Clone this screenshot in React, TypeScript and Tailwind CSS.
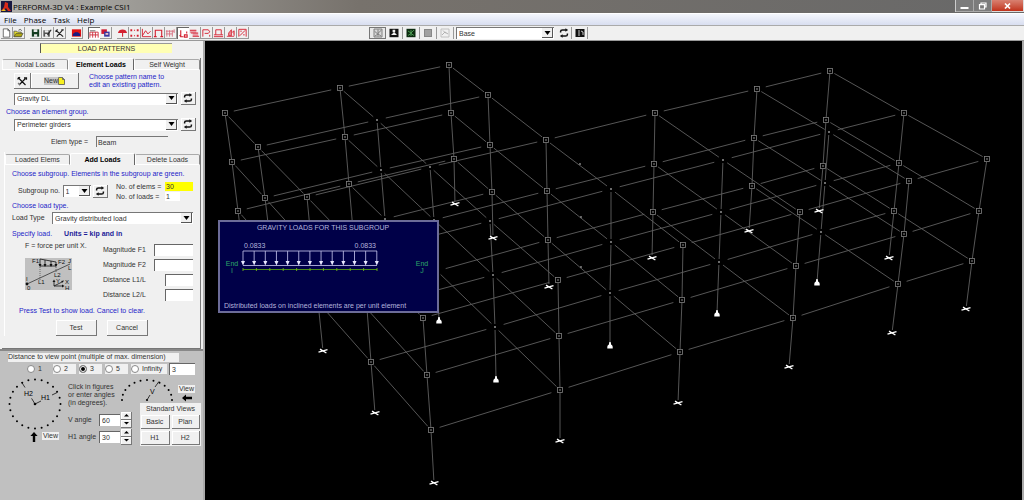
import React from "react";

type Pt = [number, number];
type Column = { row: string; pts: Pt[]; dot?: boolean; support: "fixed" | "pin" | "none" };

/* One entry per column line: roof, middle floor, lower floor, base. */
const columns: Column[] = [
  { row: "A", pts: [[225, 113], [232, 162], [238, 211], [244, 258]], support: "none" },
  { row: "A", pts: [[340, 88], [345, 137], [349, 184], [353, 230]], support: "none" },
  { row: "A", pts: [[449, 65], [451, 113], [454, 159], [455, 204]], support: "fixed" },
  { row: "B", pts: [[258, 147], [265, 198], [271, 248], [277, 296]], support: "none" },
  { row: "B", pts: [[377, 120], [381, 170], [385, 219], [388, 266]], dot: true, support: "none" },
  { row: "B", pts: [[488, 95], [490, 145], [492, 192], [493, 238]], support: "fixed" },
  { row: "C", pts: [[307, 197], [312, 250], [318, 302], [323, 351]], support: "fixed" },
  { row: "C", pts: [[430, 167], [434, 220], [437, 271], [439, 320]], dot: true, support: "pin" },
  { row: "C", pts: [[546, 140], [547, 191], [548, 240], [549, 287]], support: "fixed" },
  { row: "C", pts: [[655, 113], [654, 164], [653, 212], [652, 258]], support: "fixed" },
  { row: "C", pts: [[757, 89], [754, 138], [752, 186], [749, 231]], support: "fixed" },
  { row: "C", pts: [[830, 71], [826, 120], [823, 166], [819, 211]], support: "fixed" },
  { row: "D", pts: [[362, 254], [367, 309], [371, 362], [375, 413]], support: "fixed" },
  { row: "D", pts: [[490, 221], [493, 275], [495, 327], [496, 379]], dot: true, support: "pin" },
  { row: "D", pts: [[611, 189], [611, 242], [610, 293], [610, 345]], dot: true, support: "pin" },
  { row: "D", pts: [[723, 160], [721, 212], [719, 262], [717, 313]], dot: true, support: "pin" },
  { row: "D", pts: [[829, 132], [825, 183], [821, 232], [817, 282]], dot: true, support: "pin" },
  { row: "D", pts: [[904, 113], [899, 163], [894, 211], [889, 258]], support: "fixed" },
  { row: "E", pts: [[423, 318], [427, 375], [431, 430], [434, 483]], support: "fixed" },
  { row: "E", pts: [[558, 280], [559, 336], [560, 390], [560, 441]], support: "fixed" },
  { row: "E", pts: [[683, 245], [682, 300], [680, 352], [678, 403]], support: "fixed" },
  { row: "E", pts: [[800, 212], [796, 266], [793, 318], [789, 367]], support: "fixed" },
  { row: "E", pts: [[909, 181], [904, 234], [898, 284], [892, 333]], support: "fixed" },
  { row: "E", pts: [[987, 159], [979, 211], [972, 261], [966, 309]], support: "fixed" },
];

const rowOrder = ["A", "B", "C", "D", "E"];
const midDots: Pt[] = [[580, 164], [581, 217], [581, 267]];

function Beam({ a, b, gap }: { a: Pt; b: Pt; gap: number }) {
  const dx = b[0] - a[0];
  const dy = b[1] - a[1];
  const len = Math.hypot(dx, dy);
  const ux = (dx / len) * gap;
  const uy = (dy / len) * gap;
  return <line x1={a[0] + ux} y1={a[1] + uy} x2={b[0] - ux} y2={b[1] - uy} />;
}

function Frame() {
  const beams: React.ReactNode[] = [];
  rowOrder.forEach((name, r) => {
    const row = columns.filter((c) => c.row === name);
    const next = columns.filter((c) => c.row === rowOrder[r + 1]);
    row.forEach((col, i) => {
      for (let level = 0; level < 3; level++) {
        beams.push(<Beam key={`${name}${i}c${level}`} a={col.pts[level]} b={col.pts[level + 1]} gap={3} />);
        if (row[i + 1]) beams.push(<Beam key={`${name}${i}x${level}`} a={col.pts[level]} b={row[i + 1].pts[level]} gap={9} />);
        if (next[i]) beams.push(<Beam key={`${name}${i}y${level}`} a={col.pts[level]} b={next[i].pts[level]} gap={5} />);
      }
    });
  });
  return (
    <svg viewBox="205 41 817 459" preserveAspectRatio="xMinYMin meet" className="block h-full w-full" role="img" aria-label="Frame model">
      <g stroke="#606060" strokeWidth="0.9">{beams}</g>
      {columns.map((col, i) => (
        <g key={i}>
          {col.pts.slice(0, 3).map(([x, y], k) =>
            col.dot ? (
              <circle key={k} cx={x} cy={y} r="1" fill="#909090" />
            ) : (
              <g key={k}>
                <rect x={x - 2.5} y={y - 2.5} width="5" height="5" fill="#000" stroke="#808080" strokeWidth="0.8" />
                <circle cx={x} cy={y} r="0.8" fill="#a0a0a0" />
              </g>
            ),
          )}
          {col.support === "fixed" && (
            <path
              d={`M${col.pts[3][0] - 4.5} ${col.pts[3][1] + 1.2}L${col.pts[3][0] + 4.5} ${col.pts[3][1] - 1.4}M${col.pts[3][0] - 3} ${col.pts[3][1] - 1.8}L${col.pts[3][0] + 3.4} ${col.pts[3][1] + 2}`}
              stroke="#fff"
              strokeWidth="1.4"
            />
          )}
          {col.support === "pin" && (
            <path
              d={`M${col.pts[3][0] - 0.7} ${col.pts[3][1] - 3}h1.4l.4 2.6q1.6 .8 1.6 2.2v1.8h-5.4v-1.8q0-1.4 1.6-2.2z`}
              fill="#fff"
            />
          )}
        </g>
      ))}
      {midDots.map(([x, y]) => (
        <circle key={y} cx={x} cy={y} r="0.9" fill="#909090" />
      ))}
    </svg>
  );
}

function Refresh() {
  return (
    <svg viewBox="0 0 12 10" className="h-[10px] w-3" fill="none" stroke="#111" strokeWidth="1.5">
      <path d="M2.6 4.6V3.6Q2.6 2 4.4 2H8M9.4 5.4v1Q9.4 8 7.6 8H4" />
      <path d="M7.4 0.2v3.6l2.8-1.8zM4.6 6.2v3.6L1.8 8z" fill="#111" stroke="none" />
    </svg>
  );
}

function Tools() {
  return (
    <svg viewBox="0 0 12 10" className="h-[10px] w-3" fill="none" stroke="#111" strokeWidth="1.2">
      <path d="M2 1.5L9.5 9M9.5 2.5L3 9M1.5 3.2L4 1.2M8 1.8h2.5v2" />
      <path d="M2 7l2 1.8" stroke="#777" />
    </svg>
  );
}

const leftIcons: { label: string; gap?: boolean; pressed?: boolean; art: React.ReactNode }[] = [
  { label: "New", art: <path d="M2.5 .5h5l2 2v7h-7zM7.5 .5v2h2" fill="#fff" stroke="#444" strokeWidth=".8" /> },
  { label: "Open", art: <><path d="M1 9V3h3l1 1h4v5z" fill="#e8e030" stroke="#444" strokeWidth=".8" /><path d="M1 9l2.4-3.6H11L9 9z" fill="#b0a810" stroke="#444" strokeWidth=".7" /><path d="M6 2q2-2 3.6.4" fill="none" stroke="#222" strokeWidth=".8" /></> },
  { label: "Save", gap: true, art: <><path d="M2 1h8v8H2z" fill="#143c20" /><path d="M4 1h4v3H4zM4.4 6.4h3.4V9H4.4z" fill="#e8e8e8" /></> },
  { label: "Save as", art: <><path d="M1.5 2h7v7h-7z" fill="#555" /><path d="M3 2h4v2.4H3zM3.4 6h3v3h-3z" fill="#eee" /><path d="M6 7l4-5.5" stroke="#222" strokeWidth="1.2" /></> },
  { label: "Tools", art: <path d="M2 2l8 7M9.5 1.5L3 9M1.5 3.4L4 1.2M8 1.6h2.6" fill="none" stroke="#222" strokeWidth="1.2" /> },
  { label: "Section", gap: true, art: <><path d="M1 1h10v8H1z" fill="#e01010" /><path d="M2 6l2.5-1.8h3L10 6v2.2H2z" fill="#1a1a80" /></> },
  { label: "Modelling", gap: true, pressed: true, art: <><path d="M1 9V3h9v6M4 3v6M7 3v6M1 6h9" fill="none" stroke="#d03040" strokeWidth="1" /><path d="M1 1.5h6" stroke="#666" strokeWidth="1" /></> },
  { label: "Analysis", art: <><path d="M1.5 1h6v5h-6z" fill="#d01830" /><path d="M4.5 3.5h6V9h-6z" fill="#3838a0" /><path d="M6 5h3v2H6z" fill="#e8c0c8" /></> },
  { label: "Nodes", gap: true, art: <path d="M1 5Q2 1.2 6 1.2T11 5zM5.5 5h1.2v4H5.5z" fill="#d42030" /> },
  { label: "Supports", art: <path d="M1.5 1h2v2h-2zM8.5 1h2v2h-2zM1.5 7h2v2h-2zM8.5 7h2v2h-2zM5.4 1.4h1.2v1.2H5.4zM5.4 7.4h1.2v1.2H5.4z" fill="#d42030" /> },
  { label: "Curve", art: <path d="M1.5 .5V9H11M1.5 8L5 2.5 7.5 6 10.5 3" fill="none" stroke="#d42030" strokeWidth="1" /> },
  { label: "Portal", art: <path d="M2.5 9V2h7v7M1 9h3M8 9h3" fill="none" stroke="#d42030" strokeWidth="1.2" /> },
  { label: "Elements", art: <path d="M2 9V2M5 9V2M8 9V2M1 3h9M1 6h7M10 1v4" fill="none" stroke="#d87080" strokeWidth="1" /> },
  { label: "Loads", pressed: true, art: <path d="M3 1v7h3M3 8L1.8 6.2M7 6h3v2.4H7zM9.5 2.4v2" fill="none" stroke="#d42030" strokeWidth="1.2" /> },
  { label: "Drifts", art: <><path d="M1 2h7v3H1zM4 5h6v3.6H4z" fill="#e8a0a8" /><path d="M1 2h7M2 5h8M4 8.6h7" stroke="#d42030" strokeWidth="1" /></> },
  { label: "Sections", art: <path d="M2 9V1.5h6l1.5 2.2L8 5.4H4M9.5 7v2" fill="none" stroke="#d42030" strokeWidth="1" /> },
  { label: "Limit states", art: <path d="M3 7V1.5h6V7M1 7h10M1 9h10" fill="none" stroke="#d42030" strokeWidth="1" /> },
  { label: "Cases", art: <path d="M2 8.6h8M4 8V5l3-3.6V8zM8 4l2-1.4V8" fill="#e89098" stroke="#d42030" strokeWidth=".9" /> },
  { label: "Structure", art: <path d="M2 9V1h8v8M3 8l6-6M3.6 3h1.6M6.6 7h1.8" fill="none" stroke="#d42030" strokeWidth="1" /> },
];

const viewIcons: { label: string; art: React.ReactNode }[] = [
  { label: "Plot", art: <><path d="M2 1h8v8H2z" fill="#d8d8d8" stroke="#777" strokeWidth=".9" /><path d="M2.5 3.2l3 2.6L9.5 2M3 8l3-2 3 2M6 1.4v7" fill="none" stroke="#777" strokeWidth=".9" /></> },
  { label: "Export", art: <><path d="M1.5 .8h9v8.4h-9z" fill="#111" /><path d="M4.6 1.8h2.6v2.4H4.6zM3 7l2.6-2.4h1L9 7z" fill="#eee" /></> },
  { label: "Frame view", art: <><path d="M1.5 .8h9v8.4h-9z" fill="#0c2c10" /><path d="M3 3l3 2 3-3M3 7.5l3-2 3 2M6 2v6" fill="none" stroke="#58b060" strokeWidth=".8" /></> },
  { label: "Table view", art: <><path d="M2 1h8v8H2z" fill="#888" /><path d="M3 3h6M3 5h6M3 7h6" stroke="#c8c8c8" strokeWidth=".8" /></> },
  { label: "Sketch view", art: <><path d="M2 1h8v8H2z" fill="none" stroke="#bbb" strokeWidth=".9" /><path d="M3 7l3-3 3 2M4 2.5l3 3" fill="none" stroke="#aaa" strokeWidth=".9" /></> },
];

function ToolButton({ label, pressed, children }: { label: string; pressed?: boolean; children: React.ReactNode }) {
  return (
    <button
      type="button"
      aria-label={label}
      className={
        pressed
          ? "flex h-3 w-3 items-center justify-center border-t border-l border-[#666] bg-white"
          : "flex h-3 w-3 items-center justify-center border-r border-b border-[#999]"
      }
    >
      {children}
    </button>
  );
}

function Picker({ id, label, value, className }: { id: string; label: string; value: string; className: string }) {
  return (
    <div className={`relative ${className}`}>
      <select
        id={id}
        aria-label={label}
        defaultValue={value}
        className="block h-3 w-full appearance-none border-t border-l border-[#777] bg-white pr-3 pl-[2px] leading-[10px] text-[#333]"
      >
        <option>{value}</option>
      </select>
      <span className="pointer-events-none absolute top-px right-px flex h-[10px] w-[11px] items-center justify-center border-r border-b border-[#555] bg-[#f0f0f0]">
        <svg viewBox="0 0 7 4" className="h-1 w-[7px]">
          <path d="M.5 0h6l-3 4z" fill="#000" />
        </svg>
      </span>
    </div>
  );
}

const raised = "flex items-center justify-center border-r border-b border-[#777] bg-[#f0f0f0] shadow-[inset_1px_1px_0_#fff]";
const field = "block border-t border-l border-[#666] bg-white px-[2px] text-[#333]";

function RefreshButton({ label }: { label: string }) {
  return (
    <button type="button" aria-label={label} className={`${raised} h-[13px] w-[15px]`}>
      <Refresh />
    </button>
  );
}

function Tabs({ names, active }: { names: string[]; active: number }) {
  return (
    <div role="tablist" className="flex h-3 items-end">
      {names.map((name, i) => (
        <button
          key={name}
          type="button"
          role="tab"
          aria-selected={i === active}
          className={
            i === active
              ? "h-3 flex-1 rounded-t-[2px] border-t border-r border-l border-t-white border-r-[#666] border-l-white font-bold text-black"
              : "h-[11px] flex-1 rounded-t-[2px] border border-t-[#aaa] border-r-[#888] border-b-white border-l-white text-[#333]"
          }
        >
          {name}
        </button>
      ))}
    </div>
  );
}

function SectionDiagram() {
  return (
    <svg viewBox="0 0 47 32" className="h-8 w-[47px] bg-[#c0c0c0]" fontFamily="Liberation Sans, sans-serif" fontSize="6" fill="#111">
      <path d="M2 26L45 6" stroke="#333" strokeWidth=".8" />
      <path d="M15 1l16 3M15 1v7h16V4M20 2v6M26 3v5" fill="none" stroke="#111" strokeWidth=".8" />
      <path d="M15 9v13M31 9v6" stroke="#444" strokeWidth=".7" strokeDasharray="1 1" />
      <path d="M13.5 6h3L15 9zM18.5 6h3L20 9zM24.5 6h3L26 9zM29.5 6h3L31 9z" />
      <circle cx="2" cy="26" r="1.4" />
      <path d="M29 28v-4M29 28h9M29 28l8-4" stroke="#111" strokeWidth=".8" />
      <path d="M27.5 24h3L29 21.5zM37 26.5v3l2.5-1.5zM36 23l3-.6-1.4 2.4z" />
      <text x="7" y="5">F1</text>
      <text x="33" y="6">F2</text>
      <text x="43" y="5">J</text>
      <text x="43" y="12">L</text>
      <text x="1" y="23">I</text>
      <text x="2" y="32">0</text>
      <text x="13" y="26">L1</text>
      <text x="29" y="19">L2</text>
      <text x="31" y="25">Y</text>
      <text x="40" y="26">X</text>
      <text x="40" y="32">H</text>
    </svg>
  );
}

/* Tick dots along an ellipse, every 15 degrees. */
function DotArc({ cx, cy, rx, ry, count }: { cx: number; cy: number; rx: number; ry: number; count: number }) {
  return (
    <>
      {Array.from({ length: count }, (_, i) => {
        const t = (i * Math.PI) / 12;
        return <circle key={i} cx={cx + rx * Math.cos(t)} cy={cy - ry * Math.sin(t)} r="1" />;
      })}
    </>
  );
}

function Spin({ id, label, value }: { id: string; label: string; value: string }) {
  return (
    <div className="flex h-[17px] items-center">
      <label htmlFor={id} className="w-[30px] whitespace-nowrap">
        {label}
      </label>
      <input id={id} defaultValue={value} className={`${field} ml-px h-3 w-[21px]`} />
      <span className="ml-px flex flex-col">
        {["M2.5 0l2.5 2.5H0z", "M0 0h5L2.5 2.5z"].map((d, i) => (
          <button key={d} type="button" aria-label={`${label} ${i ? "down" : "up"}`} className={`${raised} h-2 w-[11px]`}>
            <svg viewBox="0 0 5 3" className="h-[3px] w-[5px]">
              <path d={d} />
            </svg>
          </button>
        ))}
      </span>
    </div>
  );
}

function LoadPanel() {
  return (
    <section className="mx-[2px] border-r border-b border-r-[#777] border-b-[#777] pb-3">
      <Tabs names={["Nodal Loads", "Element Loads", "Self Weight"]} active={1} />
      <div className="flex h-[22px] items-center pl-3">
        <button type="button" aria-label="Edit pattern" className={`${raised} h-4 w-[17px]`}>
          <Tools />
        </button>
        <button type="button" className={`${raised} h-4 w-12`}>
          <span className="bg-[#c8c8c8]">New</span>
          <svg viewBox="0 0 7 8" className="h-2 w-[7px]">
            <path d="M.5 .5h4l2 2v5h-6zM4.5 .5v2h2" fill="#f8f020" stroke="#555" strokeWidth=".8" />
          </svg>
        </button>
        <p className="ml-[10px] text-[#2424c8]">
          Choose pattern name to
          <br />
          edit an existing pattern.
        </p>
      </div>
      <div className="flex h-[13px] items-center gap-[3px] pl-3">
        <Picker id="pattern" label="Pattern" value="Gravity DL" className="w-[164px]" />
        <RefreshButton label="Refresh patterns" />
      </div>
      <p className="flex h-[13px] items-center pl-1 text-[#2424c8]">Choose an element group.</p>
      <div className="flex h-[13px] items-center gap-[3px] pl-3">
        <Picker id="group" label="Element group" value="Perimeter girders" className="w-[164px]" />
        <RefreshButton label="Refresh groups" />
      </div>
      <div className="flex h-[21px] items-center pl-[49px]">
        <label htmlFor="etype" className="w-[45px]">
          Elem type =
        </label>
        <input id="etype" readOnly value="Beam" className="h-[11px] w-[72px] border-t border-l border-[#777] bg-transparent px-px text-[#333]" />
      </div>

      <div className="ml-[2px] border-l border-white pt-px">
        <Tabs names={["Loaded Elems", "Add Loads", "Delete Loads"]} active={1} />
        <div className="px-[7px]">
          <p className="flex h-[17px] items-center whitespace-nowrap text-[#2424c8]">Choose subgroup. Elements in the subgroup are green.</p>
          <div className="flex h-[18px] items-center">
            <label htmlFor="subgroup" className="w-[53px] pl-[6px]">
              Subgroup no.
            </label>
            <Picker id="subgroup" label="Subgroup no." value="1" className="w-[30px]" />
            <span className="ml-[2px]">
              <RefreshButton label="Refresh subgroups" />
            </span>
            <dl className="ml-2 grid grid-cols-[49px_28px] gap-y-px leading-[9px]">
              <dt className="whitespace-nowrap">No. of elems =</dt>
              <dd className="bg-[#ffff00] pl-px">30</dd>
              <dt className="whitespace-nowrap">No. of loads =</dt>
              <dd className="w-[15px] bg-white pl-px">1</dd>
            </dl>
          </div>
          <p className="flex h-[11px] items-center text-[#2424c8]">Choose load type.</p>
          <div className="flex h-[14px] items-center">
            <label htmlFor="ltype" className="w-10">
              Load Type
            </label>
            <Picker id="ltype" label="Load Type" value="Gravity distributed load" className="w-[141px]" />
          </div>
          <p className="flex h-[17px] items-center text-[#2424c8]">
            Specify load.<b className="ml-3 text-[#1c1c98]">Units = kip and in</b>
          </p>
          <div className="flex justify-between">
            <div className="flex flex-col gap-2 pl-[13px]">
              <span className="whitespace-nowrap">F = force per unit X.</span>
              <SectionDiagram />
            </div>
            <div className="w-[90px]">
              {["Magnitude F1", "Magnitude F2", "Distance L1/L", "Distance L2/L"].map((name, i) => (
                <div key={name} className="flex h-[15px] items-center justify-between">
                  <label htmlFor={`load${i}`}>{name}</label>
                  <input id={`load${i}`} className={i < 2 ? `${field} h-3 w-[39px]` : `${field} h-3 w-7`} />
                </div>
              ))}
            </div>
          </div>
          <p className="flex h-[18px] items-center pl-[7px] text-[#2424c8]">Press Test to show load. Cancel to clear.</p>
          <div className="flex h-4 gap-[10px] pl-11">
            <button type="button" className={`${raised} w-[41px]`}>
              Test
            </button>
            <button type="button" className={`${raised} w-[41px]`}>
              Cancel
            </button>
          </div>
        </div>
      </div>
    </section>
  );
}

function ViewPanel() {
  return (
    <section className="flex-1 border-t-2 border-[#888] bg-[#c0c0c0] pt-[2px] pl-2">
      <h2 className="h-[9px] w-[171px] bg-[#f0f0f0]">Distance to view point (multiple of max. dimension)</h2>
      <div className="flex h-[14px] items-center pl-[19px]">
        <fieldset className="flex gap-[3px]">
          {["1", "2", "3", "5", "Infinity"].map((name) => (
            <label
              key={name}
              className={
                name === "Infinity" ? "flex h-[10px] w-9 items-center gap-[3px] bg-[#f0f0f0]" : "flex h-[10px] w-[23px] items-center gap-[3px] bg-[#f0f0f0] first:bg-transparent"
              }
            >
              <input
                type="radio"
                name="distance"
                defaultChecked={name === "3"}
                className="h-2 w-2 appearance-none rounded-full border border-[#888] bg-white checked:bg-black checked:shadow-[inset_0_0_0_1px_#fff]"
              />
              {name}
            </label>
          ))}
        </fieldset>
        <input aria-label="Distance" defaultValue="3" className={`${field} ml-[2px] h-3 w-[26px]`} />
      </div>
      <div className="mt-[2px] flex">
        <div className="w-[60px]">
          <svg viewBox="0 0 56 54" className="h-[54px] w-14" fontFamily="Liberation Sans, sans-serif" fontSize="7">
            <DotArc cx={27} cy={26} rx={25.5} ry={24.5} count={24} />
            <circle cx="27" cy="26" r="1.3" />
            <path d="M27 26l6-3M44 17l5-2.4M27 26l-3.4-5.6M17 9.5L13.5 4" stroke="#111" strokeWidth=".8" />
            <text x="33" y="22">H1</text>
            <text x="16" y="17.5">H2</text>
          </svg>
          <div className="flex items-start gap-1 pl-[22px]">
            <svg viewBox="0 0 8 10" className="h-[10px] w-2">
              <path d="M4 0l3.6 4H5.2v6H2.8V4H.4z" />
            </svg>
            <span className="bg-[#f0f0f0] px-px">View</span>
          </div>
        </div>
        <div className="w-16">
          <p className="mt-[5px] mb-1 whitespace-nowrap">
            Click in figures
            <br />
            or enter angles
            <br />
            (in degrees).
          </p>
          <Spin id="v" label="V angle" value="60" />
          <Spin id="h1" label="H1 angle" value="30" />
        </div>
        <div className="ml-2 w-[61px]">
          <div className="mb-px -ml-5 flex h-6 items-end gap-1">
            <svg viewBox="0 0 54 24" className="h-6 w-[54px]" fontFamily="Liberation Sans, sans-serif" fontSize="7">
              <DotArc cx={27} cy={22} rx={25} ry={20} count={13} />
              <circle cx="27" cy="22" r="1.1" />
              <path d="M27 22l3-5M35 9l4-5.6" stroke="#111" strokeWidth=".8" />
              <text x="30" y="15.5">V</text>
            </svg>
            <div className="flex flex-col items-center gap-px">
              <span className="bg-[#f0f0f0] px-px">View</span>
              <svg viewBox="0 0 10 8" className="h-2 w-[10px]">
                <path d="M0 4l4-3.4v2.2h6v2.4H4v2.2z" />
              </svg>
            </div>
          </div>
          <div className="bg-[#f0f0f0] p-px">
            <h3 className="h-[11px] pt-px text-center whitespace-nowrap">Standard Views</h3>
            <div className="grid grid-cols-2 gap-[2px]">
              {["Basic", "Plan", "H1", "H2"].map((name) => (
                <button key={name} type="button" className={`${raised} h-[14px]`}>
                  {name}
                </button>
              ))}
            </div>
          </div>
        </div>
      </div>
    </section>
  );
}

function LoadPopup() {
  const arrows = Array.from({ length: 13 }, (_, i) => 2 + i * 11.15);
  return (
    <section className="absolute top-[179px] left-[13px] flex h-[93px] w-[221px] flex-col border-2 border-[#6c6c98] bg-[#000048] text-[#b4b4dc]">
      <h2 className="pt-[2px] pr-[11px] text-center">GRAVITY LOADS FOR THIS SUBGROUP</h2>
      <div className="mt-[10px] flex items-start pr-[7px] pl-1">
        <p className="w-4 pt-[18px] text-center leading-[7px] text-[#2ca868]">
          End
          <br />I
        </p>
        <div className="ml-px">
          <div className="flex w-[136px] justify-between pr-px pl-[3px]">
            <span>0.0833</span>
            <span>0.0833</span>
          </div>
          <svg viewBox="0 0 138 22" className="h-[22px] w-[138px]">
            <path d="M2 1H136M2 15.5H136" stroke="#b4b4e0" strokeWidth=".9" />
            {arrows.map((x) => (
              <g key={x}>
                <path d={`M${x} 1v11`} stroke="#b4b4e0" strokeWidth=".9" />
                <path d={`M${x - 2} 11h4l-2 4.5z`} fill="#e8e8ff" />
              </g>
            ))}
            <path d="M2 19.5H136" stroke="#4c8c18" strokeWidth="1.2" />
            <path d="M2 18v3M15.4 18v3M28.8 18v3M42.2 18v3M55.6 18v3M69 18v3M82.4 18v3M95.8 18v3M109.2 18v3M122.6 18v3M136 18v3" stroke="#70b020" strokeWidth=".9" />
          </svg>
        </div>
        <p className="ml-auto w-4 pt-[18px] text-center leading-[7px] text-[#2ca868]">
          End
          <br />J
        </p>
      </div>
      <p className="mt-auto pb-px pl-1 whitespace-nowrap">Distributed loads on inclined elements are per unit element</p>
    </section>
  );
}

export default function App() {
  return (
    <div className="flex min-h-screen flex-col overflow-hidden bg-[#f0f0f0] font-['Liberation_Sans',sans-serif] text-[7px] leading-[8px] text-[#333]">
      <header className="flex h-[13px] items-center bg-linear-to-r from-[#b4b4b0] via-[#77726c] via-35% to-[#686868] pl-px">
        <svg viewBox="0 0 11 11" className="h-[11px] w-[11px]">
          <path d="M0 0h11v11H0z" fill="#181840" />
          <path d="M4 1l3 1v4l3 4H7L5 7 2 10H0l3-4z" fill="#d82818" />
          <path d="M0 10l3-2 2 2z" fill="#e8c020" />
        </svg>
        <h1 className="ml-px font-['Open_Sans',sans-serif] text-[8px] leading-[12px] text-black">PERFORM-3D V4 : Example CSI1</h1>
        <div className="mb-px ml-auto flex h-3 border-l border-[#ccc]">
          <button type="button" aria-label="Minimize" className="flex w-[18px] items-center justify-center border-r border-b border-[#aaa] bg-[#7c7c7c]">
            <svg viewBox="0 0 9 8" className="h-2 w-[9px]"><path d="M.5 5h8v2h-8z" fill="#fff" /></svg>
          </button>
          <button type="button" aria-label="Restore" className="flex w-[18px] items-center justify-center border-r border-b border-[#aaa] bg-[#7c7c7c]">
            <svg viewBox="0 0 9 8" className="h-2 w-[9px]" fill="none" stroke="#fff" strokeWidth="1.2"><path d="M3 2V1h5v4H7M1.5 2.6h5V7h-5z" /></svg>
          </button>
          <button type="button" aria-label="Close" className="flex w-[32px] items-center justify-center border-r border-b border-[#ddd] bg-linear-to-b from-[#d88070] to-[#c03018]">
            <svg viewBox="0 0 9 8" className="h-2 w-[9px]"><path d="M2 1.5l5 5M7 1.5l-5 5" stroke="#fff" strokeWidth="1.7" /></svg>
          </button>
        </div>
      </header>
      <nav className="flex h-[13px] items-center gap-[7px] border-t border-b border-t-white border-b-[#aaa] bg-linear-to-b from-[#f4f6fc] to-[#d8def0] pl-1 font-['Open_Sans',sans-serif] text-[8px] text-black">
        {["File", "Phase", "Task", "Help"].map((name) => (
          <button key={name} type="button">
            {name}
          </button>
        ))}
      </nav>
      <div className="flex h-[15px] items-center border-b border-[#999]">
        <div className="flex w-[369px] shrink-0 items-center pl-px">
          {leftIcons.map((icon) => (
            <React.Fragment key={icon.label}>
              {icon.gap && <span className="w-[5px]" />}
              <ToolButton label={icon.label} pressed={icon.pressed}>
                <svg viewBox="0 0 12 10" className="h-[10px] w-3">
                  {icon.art}
                </svg>
              </ToolButton>
            </React.Fragment>
          ))}
        </div>
        {viewIcons.map((icon, i) => (
          <button
            key={icon.label}
            type="button"
            aria-label={icon.label}
            className={
              i === 0
                ? "flex h-3 w-[17px] items-center justify-center border border-[#777] bg-[#e8e8e8]"
                : "flex h-3 w-[17px] items-center justify-center border-r border-[#999]"
            }
          >
            <svg viewBox="0 0 12 10" className="h-[10px] w-3">
              {icon.art}
            </svg>
          </button>
        ))}
        <Picker id="view" label="View" value="Base" className="ml-[2px] w-[98px]" />
        <button type="button" aria-label="Refresh view" className="ml-[2px] flex h-3 w-4 items-center justify-center border-r border-[#999]">
          <Refresh />
        </button>
        <button type="button" aria-label="Split view" className="flex h-3 w-4 items-center justify-center border-r border-[#999]">
          <svg viewBox="0 0 12 10" className="h-[10px] w-3">
            <path d="M1.5 1h9v8h-9z" fill="#111" />
            <path d="M5 2v6M7 3l2 1v3" fill="none" stroke="#ddd" strokeWidth=".9" />
          </svg>
        </button>
      </div>
      <main className="flex flex-1">
        <aside className="flex w-[205px] shrink-0 flex-col border-r-2 border-[#aaa]">
          <h2 className="mt-[2px] mb-[5px] ml-10 h-[10px] w-[132px] border-t border-l border-t-[#999] border-l-[#555] bg-[#ffffb4] text-center leading-[9px]">
            LOAD PATTERNS
          </h2>
          <LoadPanel />
          <ViewPanel />
        </aside>
        <div className="relative min-w-0 flex-1 border-r-2 border-[#aaa] bg-black">
          <Frame />
          <LoadPopup />
        </div>
      </main>
    </div>
  );
}
